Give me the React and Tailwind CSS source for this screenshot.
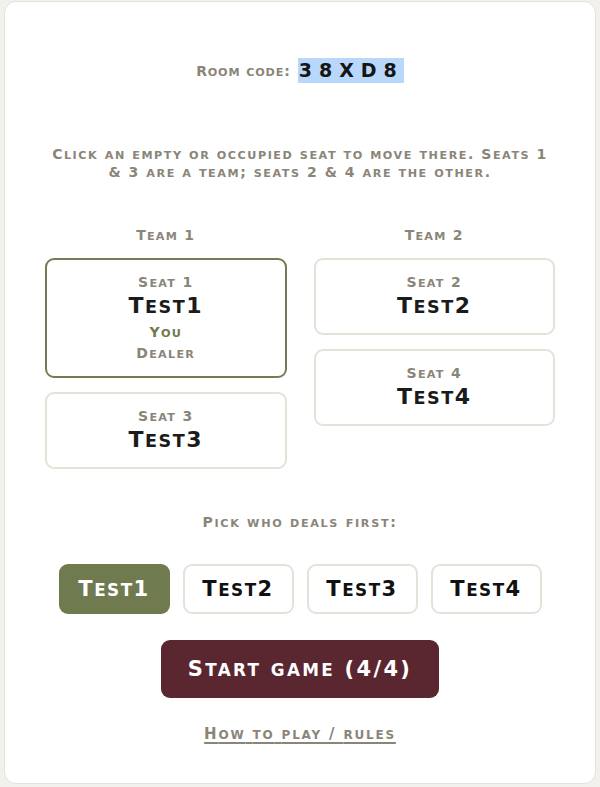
import { useState } from "react";

const players = ["Test1", "Test2", "Test3", "Test4"];

const seats = {
  1: { name: "Test1", you: true, dealer: true },
  2: { name: "Test2" },
  3: { name: "Test3" },
  4: { name: "Test4" },
};

// Engraved-style small caps: lowercase runs are set as smaller capitals
function Sc({ text }) {
  const parts = text.split(/([a-z]+)/);
  return parts.map((p, i) =>
    /^[a-z]+$/.test(p) ? (
      <span key={i} className="uppercase text-[0.8em] leading-none">
        {p}
      </span>
    ) : (
      p
    )
  );
}

function SeatCard({ num, seat, mine }) {
  return (
    <button
      className={`w-full rounded-[9px] border-2 bg-white flex flex-col items-center pt-[12px] pb-[13px] ${
        mine ? "border-[#737c52]" : "border-[#e5e2da]"
      }`}
    >
      <span className="text-[14px] leading-[20px] tracking-[0.09em] text-[#8a8579]">
        <Sc text={`Seat ${num}`} />
      </span>
      <span className="text-[22px] leading-[28px] tracking-[0.07em] text-[#1b1b1b]">
        <Sc text={seat.name} />
      </span>
      {seat.you && (
        <span className="text-[14px] leading-[22px] tracking-[0.09em] text-[#6f7a4c] mt-[1px]">
          <Sc text="You" />
        </span>
      )}
      {seat.dealer && (
        <span className="text-[14px] leading-[20px] tracking-[0.09em] text-[#8a8579]">
          <Sc text="Dealer" />
        </span>
      )}
    </button>
  );
}

export default function App() {
  const [dealer, setDealer] = useState("Test1");

  return (
    <div className="min-h-screen bg-[#f3f1ec] px-[4px] pt-[1px] font-['DejaVu_Sans',sans-serif] font-bold">
      <div className="h-[783px] bg-white border border-[#e5e2da] rounded-[12px] flex flex-col items-center">
        {/* Room code */}
        <div className="mt-[56px] flex items-center text-[14px] tracking-[0.06em] text-[#8a8579]">
          <span className="leading-[20px]">
            <Sc text="Room code:" />
          </span>
          <span className="ml-[7px] h-[25px] leading-[25px] pl-[1px] bg-[#b9d6fb] text-[19px] tracking-[0.37em] text-[#151515]">
            38XD8
          </span>
        </div>

        <p className="mt-[62px] w-[506px] text-center text-[14px] leading-[18px] tracking-[0.11em] text-[#8a8579]">
          <Sc text="Click an empty or occupied seat to move there. Seats 1 & 3 are a team; seats 2 & 4 are the other." />
        </p>

        {/* Teams */}
        <div className="mt-[44px] w-[510px] grid grid-cols-2 gap-x-[27px]">
          <div className="flex flex-col items-center">
            <h3 className="text-[14px] leading-[20px] tracking-[0.09em] text-[#8a8579]">
              <Sc text="Team 1" />
            </h3>
            <div className="mt-[13px] w-full flex flex-col gap-[14px]">
              <SeatCard num={1} seat={seats[1]} mine />
              <SeatCard num={3} seat={seats[3]} />
            </div>
          </div>
          <div className="flex flex-col items-center">
            <h3 className="text-[14px] leading-[20px] tracking-[0.09em] text-[#8a8579]">
              <Sc text="Team 2" />
            </h3>
            <div className="mt-[13px] w-full flex flex-col gap-[14px]">
              <SeatCard num={2} seat={seats[2]} />
              <SeatCard num={4} seat={seats[4]} />
            </div>
          </div>
        </div>

        {/* First dealer */}
        <p className="mt-[43px] text-[14px] leading-[20px] tracking-[0.12em] text-[#8a8579]">
          <Sc text="Pick who deals first:" />
        </p>
        <div className="mt-[32px] flex gap-[13px]">
          {players.map((p) => (
            <button
              key={p}
              onClick={() => setDealer(p)}
              className={`w-[111px] h-[50px] rounded-[9px] text-[21px] leading-[28px] tracking-[0.07em] ${
                dealer === p
                  ? "bg-[#6f7a4f] text-white"
                  : "bg-white border-2 border-[#e5e2da] text-[#111]"
              }`}
            >
              <Sc text={p} />
            </button>
          ))}
        </div>

        <button className="mt-[26px] w-[278px] h-[58px] rounded-[9px] bg-[#5a2630] text-white text-[21px] leading-[28px] tracking-[0.11em]">
          <Sc text="Start game (4/4)" />
        </button>

        <a
          href="#"
          className="mt-[25px] text-[15px] leading-[22px] tracking-[0.12em] text-[#8a8579] underline underline-offset-[3px] decoration-2"
        >
          <Sc text="How to play / rules" />
        </a>
      </div>
    </div>
  );
}
